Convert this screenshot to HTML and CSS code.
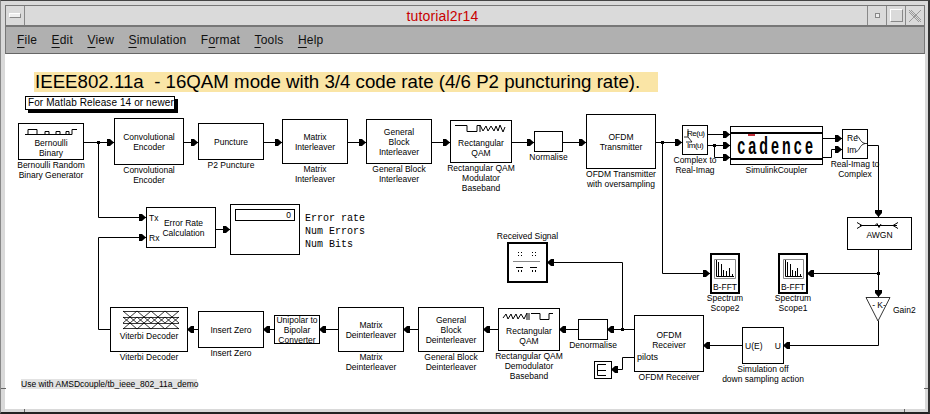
FILE: index.html
```html
<!DOCTYPE html>
<html>

<head>
  <link rel="stylesheet" href="styles.css">
</head>

<body>
  <div class="window">
    <div class="tick tick-l"></div>
    <div class="tick tick-r"></div>
    <div class="tick tick-bl"></div>
    <div class="tick tick-br"></div>

    <div class="titlebar">
      <div class="win-btn win-menu"><span></span></div>
      <div class="win-title">tutorial2r14</div>
      <div class="win-btn win-min"><span></span></div>
      <div class="win-btn win-max"><span></span></div>
      <div class="win-btn win-close">
        <svg width="14" height="14" viewBox="0 0 14 14">
          <path d="M1 1L13 13M13 1L1 13M3 1L13 11M1 3L11 13" stroke="#999" fill="none" />
        </svg>
      </div>
    </div>

    <div class="menubar">
      <span><u>F</u>ile</span>
      <span><u>E</u>dit</span>
      <span><u>V</u>iew</span>
      <span><u>S</u>imulation</span>
      <span>F<u>o</u>rmat</span>
      <span><u>T</u>ools</span>
      <span><u>H</u>elp</span>
    </div>

    <div class="canvas">
      <div class="headline">IEEE802.11a&nbsp; - 16QAM mode with 3/4 code rate (4/6 P2 puncturing rate).</div>
      <div class="note">For Matlab Release 14 or newer</div>
      <div class="footnote">Use with AMSDcouple/tb_ieee_802_11a_demo</div>

      <!-- wires and block icons -->
      <svg class="wires" width="930" height="414" viewBox="0 0 930 414">
        <defs>
          <marker id="arrow" markerWidth="8" markerHeight="8" refX="8" refY="4" orient="auto" markerUnits="userSpaceOnUse">
            <path d="M1 .5H4L8 4L4 7.500H1z" fill="#000" />
          </marker>
        </defs>

        <g class="wire">
          <path d="M84 142.500H114" />
          <path d="M183 142.500H198" />
          <path d="M263 142.500H282" />
          <path d="M347 142.500H366" />
          <path d="M431 142.500H450" />
          <path d="M511 142.500H534" />
          <path d="M562 142.500H586" />
          <path d="M655 142.500H682" />
          <path d="M98.500 142V217.500H146" />
          <path d="M110 329.500H98.500V237.500H146" />
          <path d="M215 229.500H230" />
          <path d="M707 134.500H730" />
          <path d="M707 145.500H730" />
          <path d="M714.500 145V157.500H730" />
          <path d="M822 138.500H842" />
          <path d="M822 157.500H831.500V149.500H842" />
          <path d="M867 145.500H878.500V217" />
          <path d="M878.500 249V297" />
          <path d="M878 273.500H807" />
          <path d="M878.500 321V345.500H783" />
          <path d="M742 345.500H703" />
          <path d="M662.500 142V273.500H710" />
          <path d="M634 329.500H607" />
          <path d="M622.500 329V262.500H547" />
          <path d="M578 329.500H559" />
          <path d="M498 329.500H483" />
          <path d="M418 329.500H403" />
          <path d="M338 329.500H319" />
          <path d="M274 329.500H263" />
          <path d="M198 329.500H187" />
          <path d="M634 357.500H622.500V369.500H611" />
        </g>

        <g class="dots">
          <rect x="97" y="141" width="3" height="3" />
          <rect x="661" y="141" width="3" height="3" />
          <rect x="713" y="144" width="3" height="3" />
          <rect x="877" y="272" width="3" height="3" />
          <rect x="621" y="328" width="3" height="3" />
          <!-- received signal constellation -->
          <rect x="518" y="252" width="1" height="1" />
          <rect x="521" y="252" width="1" height="1" />
          <rect x="518" y="255" width="1" height="1" />
          <rect x="521" y="255" width="1" height="1" />
          <rect x="532" y="252" width="1" height="1" />
          <rect x="535" y="252" width="1" height="1" />
          <rect x="532" y="255" width="1" height="1" />
          <rect x="535" y="255" width="1" height="1" />
          <rect x="516" y="267" width="7" height="1" />
          <rect x="530" y="267" width="7" height="1" />
          <rect x="518" y="270" width="1" height="2" />
          <rect x="521" y="270" width="1" height="2" />
          <rect x="532" y="270" width="1" height="2" />
          <rect x="535" y="270" width="1" height="2" />
        </g>

        <g class="icon">
          <!-- bernoulli pulse train -->
          <path d="M25 134.500H28V129.500H37V134.500H45V131.500H49V134.500H56V131.500H60V134.500H66V131.500H69V134.500H72V129.500H77" />
          <path d="M25 134.500H72" />
          <!-- qam modulator -->
          <path d="M455 125.500H467V131.500H477V125.500H480V132M480 125L483 131L486 126L488 131L491 126L494 131L496 126L498 131L500 125L503 132L505 127" />
          <!-- qam demodulator -->
          <path d="M503 318L506 314L508 319L511 314L513 319L516 314L518 319L521 314L524 319L527 313V320M529 313V320M531 313.500H540V319.500H549V313.500H553" />
          <!-- viterbi trellis -->
          <path d="M123 311.500H179M123 328.500H179M123 317.500H179M123 323.500H179" class="thin" />
          <path d="M123 311L137 323L151 311L165 323L179 311M123 323L137 311L151 323L165 311L179 323M123 317L137 329L151 317L165 329L179 317M123 329L137 317L151 329L165 317L179 329" class="thin" />
          <!-- re/im splitter -->
          <path d="M688 129V137H684M688 137L692 142H686" class="thin" />
          <path d="M856 135.500C860 136 859 142 865 143.500C859 145 860 151 856 151.500" class="thin" />
          <path d="M865 143.500H867" class="thin" />
          <!-- awgn -->
          <path d="M860 225.500H897M857 222.500L862 225.500L857 228.500M898 222.500L893 225.500L898 228.500M875 225.500L877 223.500L879 227.500L881 224" />
          <!-- terminator -->
          <path d="M606 364.500H597.500V375.500H606M598 370.500H606" />
          <!-- received signal axis -->
          <path d="M513 261.500H540" class="grey" />
          <!-- gain -->
          <path d="M866 297.500H890L878 321z" class="thin" />
          <!-- scope screens -->
          <path d="M714.500 259.500H735.500V278.500H714.500z" class="grey" />
          <path d="M716.500 260V276.500H734M718.500 262V276M721.500 264V276M723.500 270V276M726.500 271V276M729.500 268V276M732.500 274V276" />
          <path d="M783.500 259.500H803.500V278.500H783.500z" class="grey" />
          <path d="M785.500 260V276.500H802M787.500 262V276M790.500 264V276M792.500 270V276M795.500 271V276M797.500 268V276M800.500 274V276" />
        </g>
      </svg>

      <!-- top row -->
      <div class="block n-bernoulli"><span>Bernoulli<br>Binary</span><div class="cap">Bernoulli Random<br>Binary Generator</div></div>
      <div class="block n-conv">Convolutional<br>Encoder<div class="cap">Convolutional<br>Encoder</div></div>
      <div class="block n-punct">Puncture<div class="cap">P2 Puncture</div></div>
      <div class="block n-matrix">Matrix<br>Interleaver<div class="cap">Matrix<br>Interleaver</div></div>
      <div class="block n-gbi">General<br>Block<br>Interleaver<div class="cap">General Block<br>Interleaver</div></div>
      <div class="block n-qam"><span>Rectangular<br>QAM</span><div class="cap">Rectangular QAM<br>Modulator<br>Baseband</div></div>
      <div class="block n-norm"><div class="cap">Normalise</div></div>
      <div class="block n-tx">OFDM<br>Transmitter<div class="cap">OFDM Transmitter<br>with oversampling</div></div>
      <div class="block n-c2ri"><span class="reim">Re(u)<br>Im(u)</span><div class="cap">Complex to<br>Real-Imag</div></div>
      <div class="block n-cadence"><div class="logo"><i></i><span>cadence</span></div><div class="cap">SimulinkCoupler</div></div>
      <div class="block n-ri2c"><span class="reim2">Re<br>Im</span><div class="cap">Real-Imag to<br>Complex</div></div>
      <div class="block n-awgn"><span>AWGN</span></div>

      <!-- error rate -->
      <div class="block n-err">Error Rate<br>Calculation<span class="port p-tx">Tx</span><span class="port p-rx">Rx</span></div>
      <div class="block n-display"><div class="readout">0</div></div>
      <div class="mono">Error rate<br>Num Errors<br>Num Bits</div>

      <!-- scopes -->
      <div class="block scope n-rsig"><div class="cap cap-top">Received Signal</div></div>
      <div class="block scope n-sc2"><span class="fft">B-FFT</span><div class="cap">Spectrum<br>Scope2</div></div>
      <div class="block scope n-sc1"><span class="fft">B-FFT</span><div class="cap">Spectrum<br>Scope1</div></div>
      <div class="gain-k">- K-</div>
      <div class="gain-label">Gain2</div>

      <!-- bottom row -->
      <div class="block n-viterbi"><span>Viterbi Decoder</span><div class="cap">Viterbi Decoder</div></div>
      <div class="block n-zero">Insert Zero<div class="cap">Insert Zero</div></div>
      <div class="block n-uni">Unipolar to<br>Bipolar<br>Converter</div>
      <div class="block n-mdei">Matrix<br>Deinterleaver<div class="cap">Matrix<br>Deinterleaver</div></div>
      <div class="block n-gbd">General<br>Block<br>Deinterleaver<div class="cap">General Block<br>Deinterleaver</div></div>
      <div class="block n-qamd"><span>Rectangular<br>QAM</span><div class="cap">Rectangular QAM<br>Demodulator<br>Baseband</div></div>
      <div class="block n-denorm"><div class="cap">Denormalise</div></div>
      <div class="block n-term"></div>
      <div class="block n-rx">OFDM<br>Receiver<span class="port p-pilots">pilots</span><div class="cap">OFDM Receiver</div></div>
      <div class="block n-sim"><span class="sim-ports"><span>U(E)</span><span>U</span></span><div class="cap">Simulation off<br>down sampling action</div></div>
    </div>
  </div>
</body>

</html>
```

FILE: styles.css
```css
html,
body {
  margin: 0;
  height: 100%;
}

body {
  font-family: 'Liberation Sans', Arial, sans-serif;
  color: #000;
  overflow: hidden;
}

/* window frame */
.window {
  position: relative;
  box-sizing: border-box;
  width: 930px;
  height: 414px;
  display: flex;
  flex-direction: column;
  padding: 4px 3px 3px 4px;
  background: #d9d9d9;
  border-top: 1px solid #444;
  border-left: 1px solid #888;
  border-right: 2px solid #333;
  border-bottom: 2px solid #222;
}

.tick {
  position: absolute;
  background: #666;
}

.tick-l {
  left: 0;
  top: 387px;
  width: 5px;
  height: 1px;
}

.tick-r {
  right: 0;
  top: 387px;
  width: 4px;
  height: 1px;
}

.tick-bl {
  left: 23px;
  bottom: 0;
  width: 1px;
  height: 3px;
}

.tick-br {
  left: 903px;
  bottom: 0;
  width: 1px;
  height: 3px;
}

.titlebar {
  flex: none;
  height: 19px;
  display: flex;
  align-items: center;
  border: 1px solid #777;
  border-bottom: 2px solid #777;
  background: #dadada;
}

.win-title {
  flex: 1;
  text-align: center;
  font-size: 14px;
  letter-spacing: .15px;
  color: #c80000;
  padding-right: 7px;
}

.win-btn {
  flex: none;
  width: 18px;
  height: 19px;
  display: flex;
  align-items: center;
  justify-content: center;
  border-left: 1px solid #888;
}

.win-menu {
  border-left: 0;
  border-right: 1px solid #888;
}

.win-menu span {
  width: 10px;
  height: 3px;
  background: #eee;
  border: 1px solid #888;
  border-top-color: #fff;
  border-left-color: #fff;
}

.win-min span {
  width: 3px;
  height: 3px;
  background: #eee;
  border: 1px solid #888;
}

.win-max span {
  width: 11px;
  height: 11px;
  border: 1px solid #888;
  border-top-color: #fff;
  border-left-color: #fff;
}

.menubar {
  flex: none;
  height: 26px;
  display: flex;
  align-items: center;
  gap: 14.4px;
  padding-left: 11px;
  background: #b0b0b0;
  border-bottom: 1px solid #666;
  border-left: 1px solid #777;
  border-right: 1px solid #777;
  font-size: 12px;
  letter-spacing: .2px;
  color: #111;
}

.menubar u {
  text-underline-offset: 3px;
}

.canvas {
  flex: 1;
  background: #fff;
}

.headline {
  position: absolute;
  left: 33px;
  top: 71px;
  width: 623px;
  height: 20px;
  padding-left: 1px;
  background: #fae5a6;
  font-size: 18.7px;
  line-height: 20px;
  white-space: nowrap;
}

.note {
  position: absolute;
  left: 24px;
  top: 95px;
  box-sizing: border-box;
  width: 150px;
  height: 14px;
  padding-left: 2px;
  background: #fff;
  border: 1px solid #000;
  box-shadow: 3px 3px 0 #000;
  font-size: 10px;
  line-height: 12px;
  letter-spacing: .1px;
  white-space: nowrap;
}

.footnote {
  position: absolute;
  left: 20px;
  top: 378px;
  width: 176px;
  height: 10px;
  background: #e2e2e2;
  font-size: 8.5px;
  line-height: 10px;
  white-space: nowrap;
}

.wires {
  position: absolute;
  left: -1px;
  top: -1px;
}

.wire path {
  fill: none;
  stroke: #000;
  stroke-width: 1;
  marker-end: url(#arrow);
}

.dots rect {
  fill: #000;
}

.icon path {
  fill: none;
  stroke: #000;
  stroke-width: 1;
}

.icon .thin {
  stroke-width: .8;
}

.icon .grey {
  stroke: #888;
}

/* diagram blocks, placed by page coordinates */
.block {
  position: absolute;
  box-sizing: border-box;
  display: flex;
  align-items: center;
  justify-content: center;
  text-align: center;
  border: 1px solid #000;
  font-size: 8.5px;
  line-height: 10px;
}

.cap {
  position: absolute;
  top: 100%;
  left: 50%;
  transform: translateX(-50%);
  margin-top: 1px;
  white-space: nowrap;
}

.cap-top {
  top: auto;
  bottom: 100%;
  margin: 0 0 3px;
}

.scope {
  border-width: 2px;
}

.fft {
  position: absolute;
  left: 0;
  right: 0;
  bottom: 0;
}

.port {
  position: absolute;
  left: 2px;
}

.p-tx {
  top: 5px;
}

.p-rx {
  top: 25px;
}

.p-pilots {
  top: 36px;
  font-size: 9px;
}

.n-bernoulli { left: 17px; top: 122px; width: 66px; height: 37px; padding-top: 12px; }
.n-conv { left: 113px; top: 117px; width: 70px; height: 47px; }
.n-punct { left: 197px; top: 122px; width: 66px; height: 37px; }
.n-matrix { left: 281px; top: 118px; width: 66px; height: 45px; }
.n-gbi { left: 365px; top: 118px; width: 66px; height: 45px; }
.n-qam { left: 449px; top: 119px; width: 62px; height: 43px; padding-top: 12px; }
.n-norm { left: 533px; top: 130px; width: 29px; height: 21px; }
.n-tx { left: 585px; top: 113px; width: 70px; height: 55px; }
.n-c2ri { left: 681px; top: 124px; width: 26px; height: 30px; justify-content: flex-start; }
.n-cadence { left: 729px; top: 125px; width: 93px; height: 39px; }
.n-ri2c { left: 841px; top: 128px; width: 26px; height: 30px; justify-content: flex-start; }
.n-awgn { left: 846px; top: 216px; width: 65px; height: 33px; padding-top: 2px; }
.n-err { left: 145px; top: 206px; width: 70px; height: 41px; padding-left: 5px; }
.n-display { left: 229px; top: 203px; width: 70px; height: 51px; align-items: flex-start; }
.n-rsig { left: 506px; top: 241px; width: 41px; height: 41px; }
.n-sc2 { left: 709px; top: 252px; width: 30px; height: 41px; }
.n-sc1 { left: 777px; top: 252px; width: 30px; height: 41px; }
.n-viterbi { left: 109px; top: 306px; width: 78px; height: 45px; padding-top: 12px; }
.n-zero { left: 197px; top: 310px; width: 66px; height: 37px; }
.n-uni { left: 273px; top: 314px; width: 46px; height: 29px; }
.n-mdei { left: 337px; top: 306px; width: 66px; height: 45px; }
.n-gbd { left: 417px; top: 306px; width: 66px; height: 45px; }
.n-qamd { left: 497px; top: 307px; width: 62px; height: 43px; padding-top: 12px; }
.n-denorm { left: 577px; top: 318px; width: 30px; height: 21px; }
.n-term { left: 593px; top: 360px; width: 18px; height: 18px; }
.n-rx { left: 633px; top: 314px; width: 70px; height: 57px; padding-bottom: 7px; }
.n-sim { left: 741px; top: 326px; width: 42px; height: 37px; }

.reim {
  font-size: 8px;
  line-height: 12px;
  letter-spacing: -.5px;
  padding-left: 4px;
  text-align: left;
}

.reim2 {
  padding-left: 4px;
  line-height: 12px;
  text-align: left;
}

.readout {
  box-sizing: border-box;
  width: 60px;
  height: 12px;
  margin-top: 4px;
  padding-right: 3px;
  border: 1px solid #000;
  text-align: right;
  line-height: 10px;
}

.mono {
  position: absolute;
  left: 304px;
  top: 211px;
  font-family: 'Liberation Mono', monospace;
  font-size: 10px;
  line-height: 13px;
  white-space: nowrap;
}

.logo {
  position: relative;
  box-sizing: border-box;
  width: 100%;
  height: 28px;
  display: flex;
  align-items: center;
  justify-content: center;
  border-top: 2px solid #000;
  border-bottom: 2px solid #000;
  font-size: 23px;
  font-weight: bold;
  letter-spacing: 5px;
}

.logo span {
  flex: none;
  transform: scaleX(.62);
}

.logo i {
  position: absolute;
  left: 17px;
  top: 0;
  width: 7px;
  height: 2px;
  background: #c0303a;
}

.gain-k {
  position: absolute;
  left: 866px;
  top: 299px;
  width: 24px;
  font-size: 8.5px;
  line-height: 10px;
  text-align: center;
}

.gain-label {
  position: absolute;
  left: 892px;
  top: 304px;
  font-size: 8.5px;
  line-height: 10px;
}

.sim-ports {
  display: flex;
  justify-content: space-between;
  width: 100%;
  padding: 0 2px;
}
```
